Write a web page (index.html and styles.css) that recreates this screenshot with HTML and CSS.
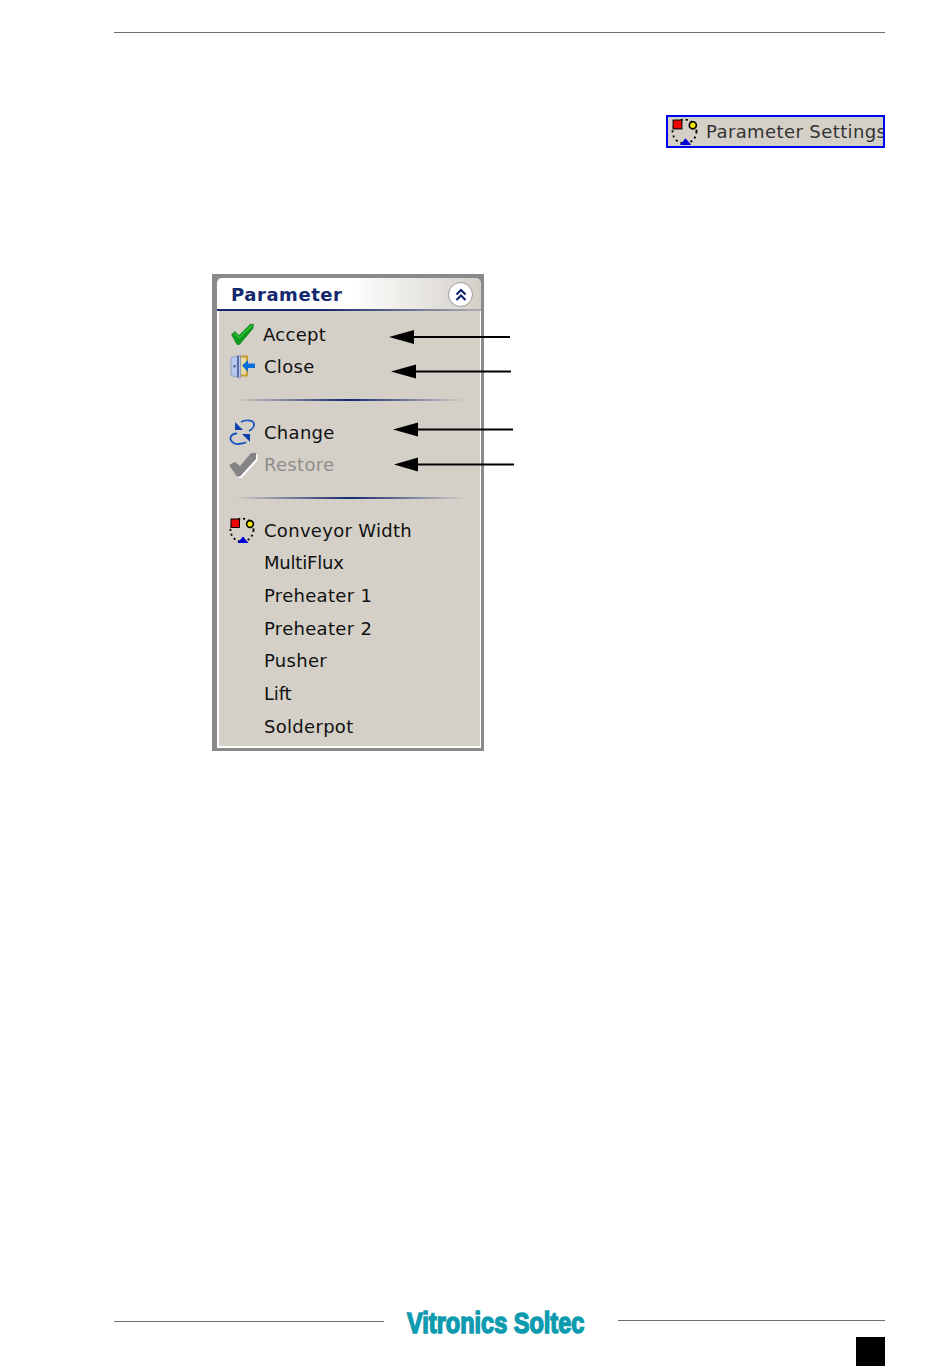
FILE: index.html
```html
<!DOCTYPE html>
<html lang="en">
<head>
<meta charset="utf-8">
<title>Parameter Settings</title>
<link rel="stylesheet" href="styles.css">
</head>
<body>
<div class="page">
  <div class="rule"></div>
  <div class="settings-row">
    <div class="settings-btn">
      <svg class="ico" width="27" height="27" viewBox="0 0 26 26"><use href="#dial"/></svg>
      <span class="settings-label">Parameter Settings</span>
    </div>
  </div>
  <div class="figure">
    <div class="panel">
      <div class="panel-head">
        <span class="panel-title">Parameter</span>
        <span class="collapse">
          <svg width="16" height="16" viewBox="0 0 16 16"><path d="M3.500 7.500 8 3l4.500 4.500M3.500 13 8 8.500l4.500 4.500" fill="none" stroke="#14286e" stroke-width="2.200"/></svg>
        </span>
      </div>
      <div class="panel-rule"></div>
      <div class="menu">
        <div class="item accept">
          <svg class="ico" width="26" height="26" viewBox="0 0 26 26"><path d="M2.500 13.500 6 10.500l4 4L21.500 3l3 .5-.5 4L10.500 23.500H8Z" fill="#0f9a1c" stroke="#0b7f18" stroke-width=".6"/><path d="M5.500 12.500l4.500 4.500L23 4.500" fill="none" stroke="#35c63c" stroke-width="1.200"/></svg>
          <span>Accept</span>
        </div>
        <div class="item">
          <svg class="ico" width="26" height="26" viewBox="0 0 26 26"><path d="M11 2.500h7v19h-7Z" fill="#e7d9a4" stroke="#c89b2c" stroke-width="1.800"/><path d="M2 3.500 11.500 1v23L2 21.500Z" fill="#b4caee" stroke="#8f9cc0"/><path d="M9 2v21" stroke="#5c6aa8" stroke-width="2"/><rect x="4.500" y="11" width="2" height="2.500" fill="#4a5a90"/><path d="M13 11.500 19 6V9.500h7v4.500h-7v4Z" fill="#0a6fd8"/></svg>
          <span>Close</span>
        </div>
        <div class="sep-row"><div class="sep"></div></div>
        <div class="item">
          <svg class="ico" width="26" height="26" viewBox="0 0 26 26"><path d="M6 3l8 8H6Z" fill="#1040b0"/><path d="M12 3C15 1 23 .5 24.500 3.500S23.500 10 20 12" fill="none" stroke="#1a55c0" stroke-width="1.800"/><path d="M21 23l-8-8h8Z" fill="#1040b0"/><path d="M8 14.500C5 14.500 2 16 1.500 19S5 25.500 9 25S16 24.500 17 23" fill="none" stroke="#1a55c0" stroke-width="1.800"/></svg>
          <span>Change</span>
        </div>
        <div class="item disabled">
          <svg class="ico big" width="30" height="28" viewBox="0 0 30 28"><path d="M1 14 7 11l5 4L23 2h5v6L12 25.500H9Z" fill="#fff" transform="translate(1.500 1.500)"/><path d="M1 14 7 11l5 4L23 2h5v6L12 25.500H9Z" fill="#848484"/></svg>
          <span>Restore</span>
        </div>
        <div class="sep-row"><div class="sep"></div></div>
        <div class="item">
          <svg class="ico" width="26" height="26" viewBox="0 0 26 26"><use href="#dial"/></svg>
          <span>Conveyor Width</span>
        </div>
        <div class="item tight"><span>MultiFlux</span></div>
        <div class="item"><span>Preheater 1</span></div>
        <div class="item"><span>Preheater 2</span></div>
        <div class="item"><span>Pusher</span></div>
        <div class="item tight"><span>Lift</span></div>
        <div class="item"><span>Solderpot</span></div>
      </div>
    </div>
    <svg class="arrows" width="310" height="200" viewBox="212 274 310 200">
      <g stroke="#000" stroke-width="2" fill="#000">
        <path d="M510 337H400"/><path d="M389 337 414 330V344Z" stroke="none"/>
        <path d="M511 371.500H402"/><path d="M391 371.500 416 364.500V378.500Z" stroke="none"/>
        <path d="M513 429.500H404"/><path d="M393 429.500 418 422.500V436.500Z" stroke="none"/>
        <path d="M514 464.500H405"/><path d="M394 464.500 418 457.500V471.500Z" stroke="none"/>
      </g>
    </svg>
  </div>
  <div class="footer">
    <div class="footer-rules">
      <div class="foot-line left"></div>
      <div class="logo"><span class="logo-text">Vitronics Soltec</span></div>
      <div class="foot-line right"></div>
    </div>
    <div class="page-box-row"><div class="page-box"></div></div>
  </div>
</div>
<svg class="defs" width="0" height="0">
  <defs>
    <g id="dial">
      <circle cx="13" cy="13" r="11.500" fill="none" stroke="#000" stroke-width="1.800" stroke-dasharray="2 3"/>
      <rect x="2" y="2" width="8.500" height="8.500" fill="#f00000" stroke="#000" stroke-width="1"/>
      <circle cx="21" cy="7" r="3.400" fill="#f2e600" stroke="#000" stroke-width="1.600"/>
      <path d="M8.500 26 14 19.500l5.500 6.500Z" fill="#0000d8"/>
    </g>
  </defs>
</svg>
</body>
</html>
```

FILE: styles.css
```css
* {
  box-sizing: border-box;
}

html,
body {
  margin: 0;
  padding: 0;
  background: #fff;
}

.page {
  width: 950px;
  height: 1370px;
  display: flex;
  flex-direction: column;
  font-family: "DejaVu Sans", Verdana, sans-serif;
  color: #111;
}

.rule {
  margin: 32px 0 0 114px;
  width: 771px;
  height: 1px;
  background: #6e6e6e;
}

.settings-row {
  display: flex;
  justify-content: flex-end;
  margin: 82px 65px 0 0;
}

.settings-btn {
  width: 219px;
  height: 33px;
  border: 2px solid #0000f0;
  background: #d4d0c8;
  display: flex;
  align-items: center;
  gap: 8px;
  padding-left: 3px;
  overflow: hidden;
  white-space: nowrap;
  font-size: 18px;
  color: #333;
}

.settings-btn .ico {
  flex: none;
}

.settings-label {
  flex: none;
  letter-spacing: 0.4px;
}

.figure {
  position: relative;
  width: 310px;
  margin: 126px 0 0 212px;
}

.panel {
  width: 272px;
  height: 477px;
  border: 4px solid #8a8a8a;
  border-left-width: 5px;
  border-right-width: 3px;
  border-bottom-width: 3px;
  background: linear-gradient(#8a8a8a 0 8px, #fff 8px);
  display: flex;
  flex-direction: column;
}

.panel-head {
  height: 31px;
  flex: none;
  display: flex;
  align-items: center;
  justify-content: space-between;
  padding: 2px 8px 0 14px;
  background: linear-gradient(90deg, #fff 0%, #fff 50%, #d4d0c8 100%);
  border-radius: 5px 5px 0 0;
}

.panel-rule {
  height: 2px;
  flex: none;
  background: linear-gradient(90deg, #14286e, #14286e 40%, #b0aeb0 100%);
}

.panel-title {
  font-size: 18px;
  font-weight: 700;
  letter-spacing: 0.55px;
  color: #14286e;
}

.collapse {
  width: 25px;
  height: 25px;
  border-radius: 50%;
  background: #fff;
  border: 1.500px solid #9a9a9a;
  display: flex;
  align-items: center;
  justify-content: center;
}

.menu {
  flex: 1;
  margin: 0 1px 2px 2px;
  padding-top: 7px;
  background: #d4d0c8;
  display: grid;
  grid-auto-rows: 32.67px;
  align-content: start;
}

.item {
  position: relative;
  display: flex;
  align-items: center;
  padding-left: 45px;
  font-size: 18px;
  letter-spacing: 0.3px;
  white-space: nowrap;
}

.item.tight {
  letter-spacing: -0.2px;
}

.item .ico {
  position: absolute;
  left: 10px;
  top: 3px;
}

.item .ico.big {
  left: 9px;
  top: 2px;
}

.accept span {
  margin-left: -1px;
}

.disabled {
  color: #8e8e8e;
}

.sep-row {
  display: flex;
  align-items: center;
  padding: 0 15px;
}

.sep {
  width: 100%;
  height: 2px;
  background: linear-gradient(90deg, #d4d0c8, #14286e 50%, #d4d0c8);
}

.arrows {
  position: absolute;
  left: 0;
  top: 0;
  pointer-events: none;
}

.footer {
  margin-top: auto;
  padding-bottom: 4px;
}

.footer-rules {
  display: flex;
  align-items: center;
  margin-left: 114px;
  width: 771px;
}

.foot-line {
  height: 1px;
  background: #6e6e6e;
}

.foot-line.left {
  width: 270px;
  margin-top: 2px;
}

.foot-line.right {
  width: 267px;
}

.logo {
  width: 234px;
  height: 26px;
  padding-left: 23px;
}

.logo-text {
  display: block;
  width: 240px;
  font-family: "Liberation Sans", sans-serif;
  font-weight: 700;
  font-size: 30px;
  line-height: 32px;
  color: #0e9bb0;
  -webkit-text-stroke: 1.600px #0e9bb0;
  white-space: nowrap;
  transform: scaleX(0.784);
  transform-origin: left center;
}

.page-box-row {
  display: flex;
  justify-content: flex-end;
  margin: 4px 65px 0 0;
}

.page-box {
  width: 29px;
  height: 29px;
  background: #000;
}

.defs {
  position: absolute;
}
```
